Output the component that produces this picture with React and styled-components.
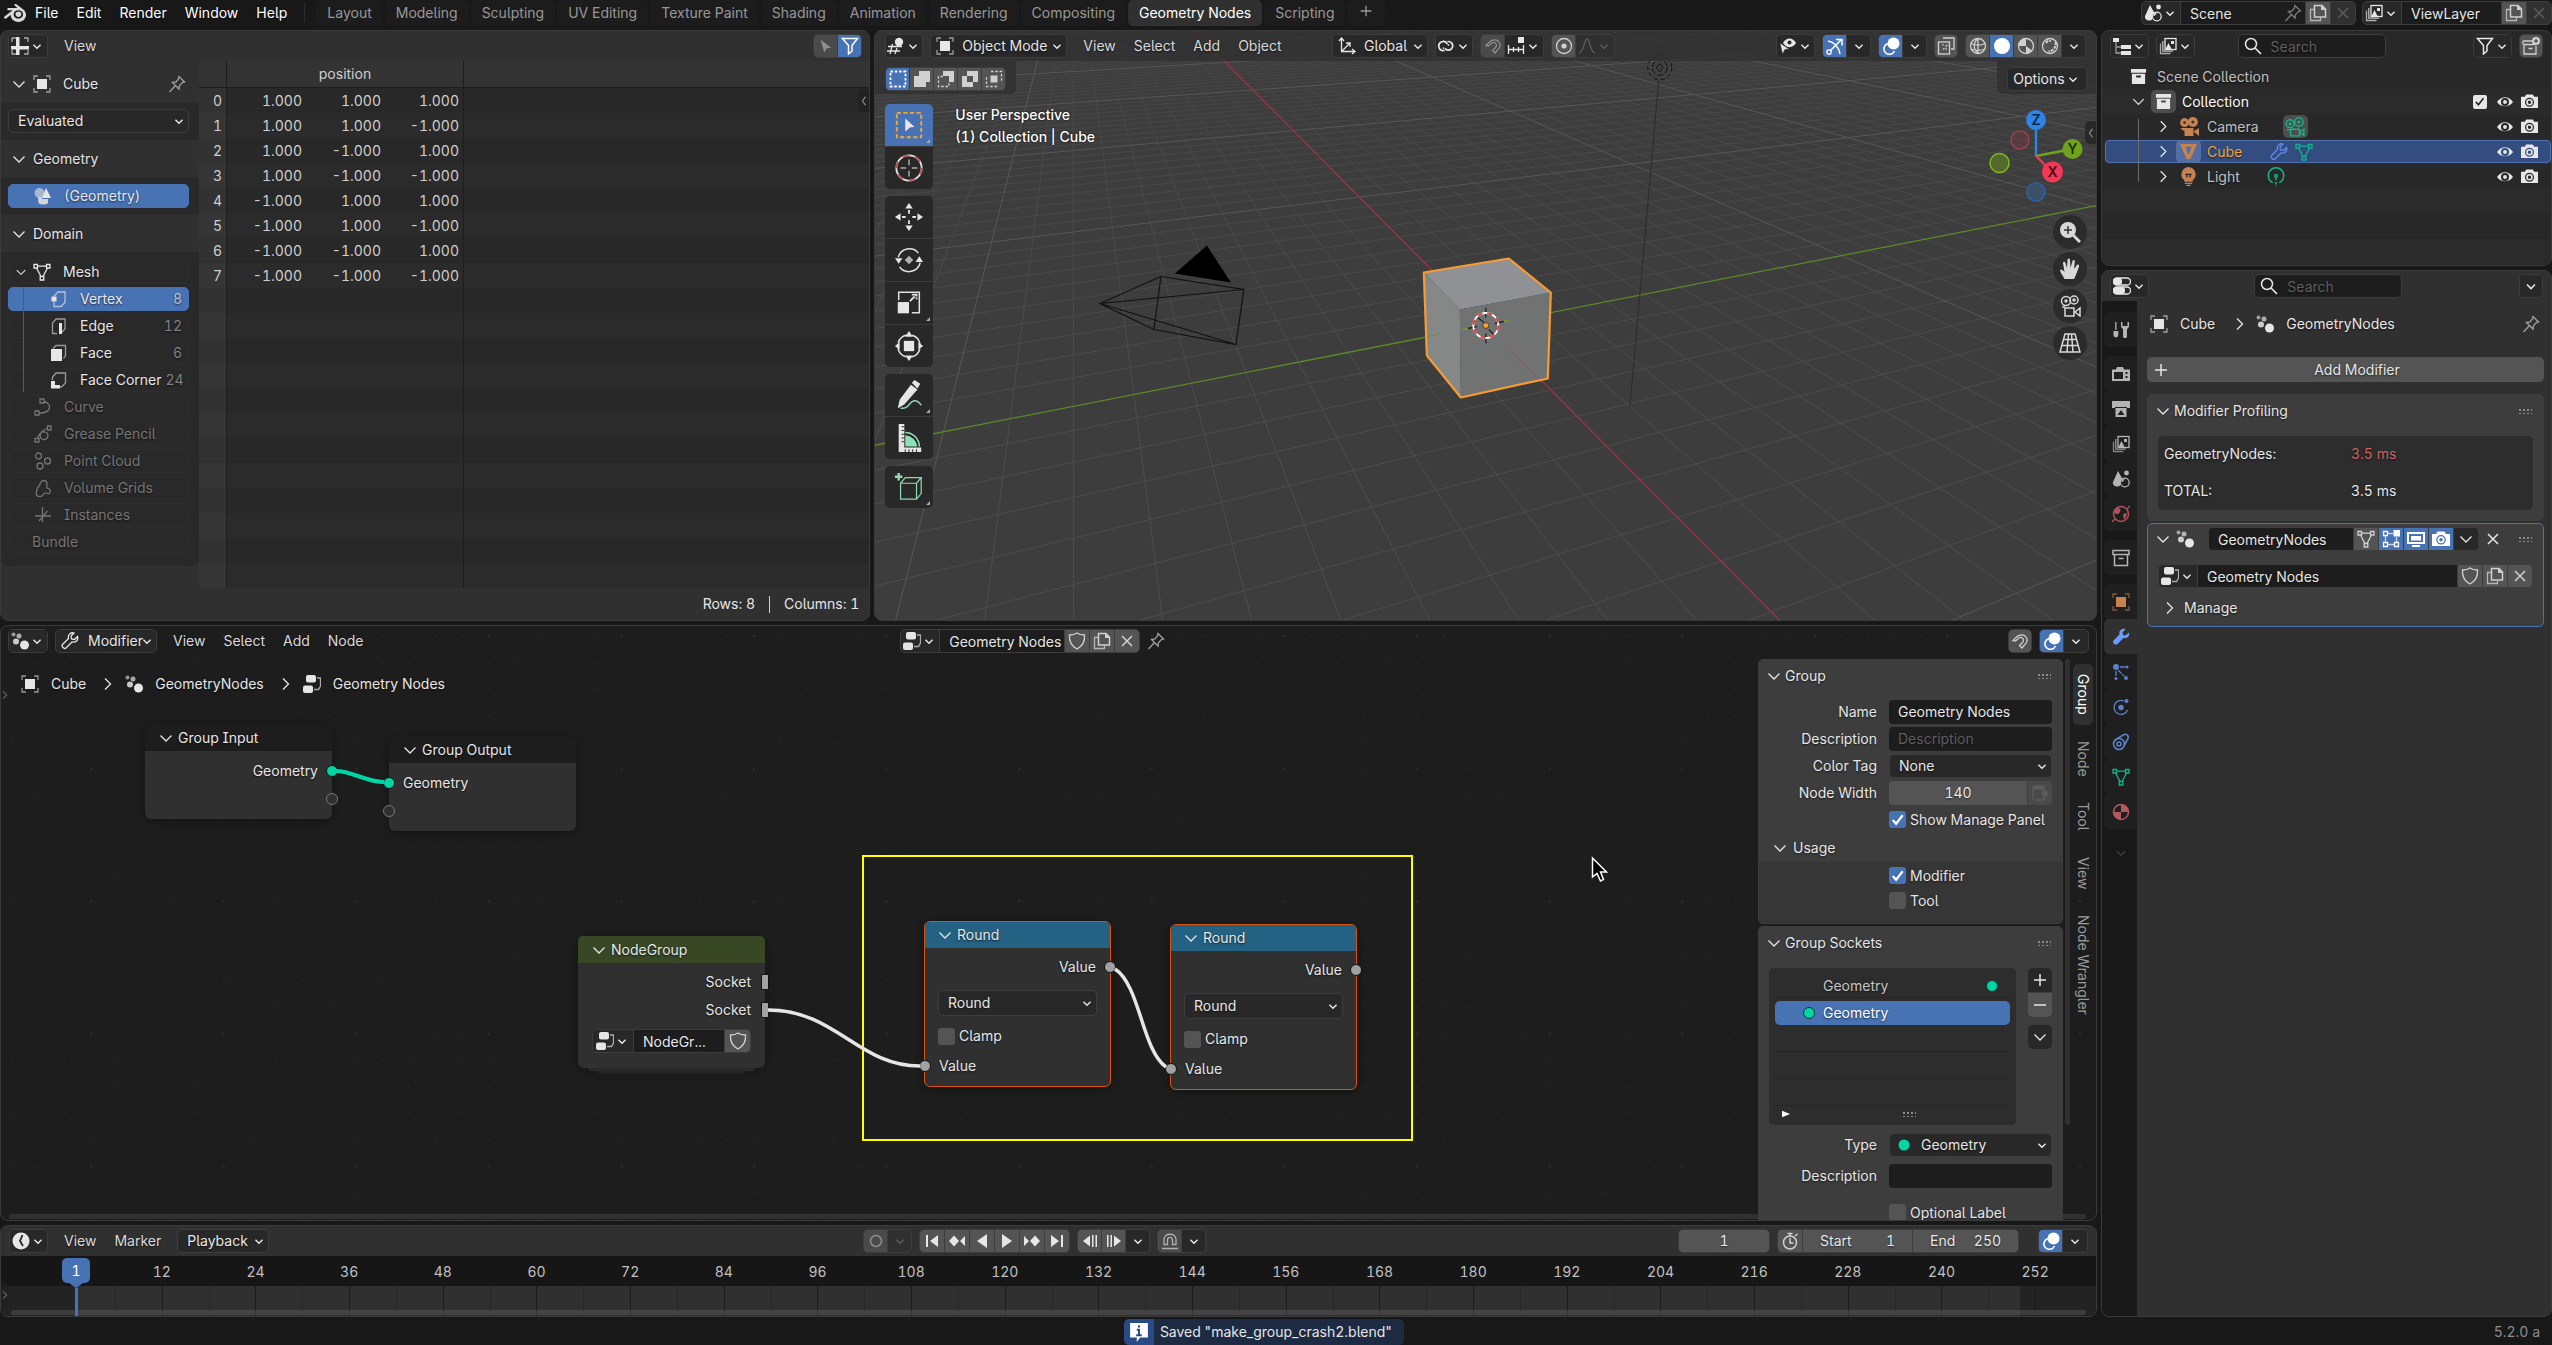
import React from "react";
import styled, { createGlobalStyle, css } from "styled-components";
import { SiBlender } from "react-icons/si";

const c = {
  app: "#181818",
  editor: "#303030",
  border: "#3a3a3a",
  field: "#1d1d1d",
  menu: "#282828",
  tool: "#545454",
  panel: "#3d3d3d",
  box: "#2d2d2d",
  blue: "#4772b3",
  text: "#e6e6e6",
  geo: "#00d6a3",
  orange: "#c68250",
  teal: "#12b48a",
};

const Global = createGlobalStyle`
  *, *::before, *::after { box-sizing: border-box; }
  body {
    margin: 0;
    background: ${c.app};
    color: ${c.text};
    font: 14px/20px Inter, "Open Sans", sans-serif;
    font-feature-settings: "tnum", "cv05", "cv08";
    overflow: hidden;
  }
  button, input, select {
    font: inherit;
    font-feature-settings: inherit;
    color: inherit;
    margin: 0;
    padding: 0;
    border: 0;
    background: none;
    border-radius: 0;
    text-shadow: inherit;
    outline: none;
  }
`;

/* ---------- icons ---------- */

const F = { fill: "currentColor", stroke: "none" };
const icons = {
  down: <path d="M5 7.500l4 4 4-4" strokeWidth="1.600" />,
  wide: <path d="M3.500 6.500L9 12l5.500-5.500" />,
  right: <path d="M6 3.500L11.500 9 6 14.500" />,
  left: <path d="M11 3.500L7 9l4 5.500" />,
  object: <><path d="M1 5V1h4M13 1h4v4M17 13v4h-4M5 17H1v-4" opacity=".6" /><rect x="4" y="4" width="10" height="10" {...F} /></>,
  sheet: <><path d="M1 5V1h4M13 1h4v4M17 13v4h-4M5 17H1v-4" opacity=".7" /><path d="M5 0h3.500v18H5zM0 9h18v3.500H0z" {...F} /></>,
  pin: <path d="M11 1.500l5.500 5.500-2 .5-3 3-.5 3.500L4.500 7.500 8 7l2.500-3zM7.500 10.500L1.500 17" />,
  geoset: <><circle cx="5.500" cy="6" r="5" {...F} opacity=".6" /><path d="M12 1l5 10H8z" {...F} /><path d="M4 10h3.500l1 2H14v4c-2 2-7 2-9.500 0z" {...F} opacity=".85" /></>,
  mesh: <path d="M1 1.500h3.500V5H1zM13.500 1.500H17V5h-3.500zM7.200 13.500h3.600V17H7.200zM4.500 3.200h9M3.500 5L8 13.500M14.500 5L10 13.500" />,
  vertex: <><path d="M4 12V16.500h7l4-4V2H8L4 6" opacity=".7" /><rect x="1.500" y="6.500" width="5" height="5" {...F} /></>,
  edge: <><path d="M7 16.500H2.500V6L6 2h9v10l-3 3" opacity=".6" /><rect x="9" y="6" width="3" height="11" {...F} /></>,
  face: <><path d="M3 4.500L6 1.500h9.500v10l-2 3" opacity=".6" /><rect x="1" y="5" width="11" height="12" {...F} /></>,
  corner: <><path d="M2.500 9V6L6 2h9.500v10l-4 4H9" opacity=".6" /><path d="M1 10h4v4h5v3.500H1z" {...F} /></>,
  curve: <path d="M6 1h4v4H6zM1 13h4v4H1zM10 3.500c8 2 8 11.500-4.500 11.500" />,
  grease: <path d="M13.500 1H17v4h-3.500zM1 13.500h4v3.500H1zM13 3.500c-7 2-9 9-4 11 5 1 7-6 2-7.500-4-1-6 2-7.500 6" />,
  points: <><circle cx="4.500" cy="4" r="3" /><circle cx="13.500" cy="9" r="3" /><circle cx="6" cy="14" r="3" /></>,
  volume: <path d="M3 16.500c-2-2 0-4 0-6 0-3 2-2 3-5 0-2 2-4 4-4s3 2 3 4c0 2-1 2 0 3.500 2 0 4 2 3 4.500-1 2-3 1-4 .5-2-1-3 3-5 3.500-2 .5-3 0-4-1z" />,
  instances: <path d="M8.500 1v15M1 10h16M13.500 5L5 15" />,
  arrow: <path d="M3 2l12 9-5 .5L7 16z" {...F} />,
  funnel: <path d="M1.500 1.500h15L11 8.500v5.500l-3.500 3V8.500z" strokeWidth="1.500" />,
  view3d: <><path d="M1 9.500h14M0 14h13M5.500 7L3 17M10 11L8 17" /><circle cx="12" cy="5" r="4.200" {...F} /></>,
  axes: <path d="M3.500 1v13.500H17M1 4l2.500-3L6 4M14 12l3 2.500-3 2.500M3.500 14.500L12 6M8 6h4v4" />,
  pivot: <path d="M7 13.500a4.500 4.500 0 1 1 3-7M11 4.500a4.300 4.300 0 1 1-2.500 7.500M11.500 7.800v.1M6.500 11v.1" strokeWidth="1.700" strokeLinecap="round" />,
  magnet: <path d="M2 8.500l3-3C8 2 13 2 15 5s1 6-2 8.500L11 16l-2.500-2.500 2.800-2.800c2-2 1-4 0-4.700-1-.8-3-.5-4.300.8L4.500 9z" />,
  magnetflat: <path d="M3 12.500V7.500C3 .5 15 .5 15 7.500v5h-3.500V8c0-3.500-5-3.500-5 0v4.500zM1 16.500h16" />,
  snapinc: <><rect x="11" y="0" width="6" height="6" {...F} /><path d="M1.500 8v9M6.500 10v5M11.500 10v5M16.500 8v9M1.500 12.500h15" /></>,
  prop: <><circle cx="9" cy="9" r="7.500" /><circle cx="9" cy="9" r="2.600" {...F} /></>,
  falloff: <path d="M1 16c5 0 5-14 8-14s3 14 8 14" />,
  eyecursor: <><path d="M4 6c3-6 10-6 13 0-3 5-9 6-13 0z" {...F} /><circle cx="10.500" cy="5.500" r="2" fill="#282828" stroke="none" /><path d="M1 6l9 6-4 .5L3.500 17z" {...F} stroke="#282828" strokeWidth=".5" /></>,
  gizmo: <><path d="M2 16L15 3M10 2.500h6v6M2 4c6 1 11 6 12 13" strokeWidth="1.500" /><circle cx="3" cy="15" r="2.200" fill="#4772b3" /></>,
  overlay: <><circle cx="11.500" cy="6.500" r="6" {...F} /><path d="M6 6.500a5.500 5.500 0 1 0 6.500 7.500" strokeWidth="1.600" /></>,
  xray: <><path d="M6 1h11v11h-3" /><rect x="1.500" y="5" width="11" height="12" /><path d="M6 8.500V6M9 8.500h3M6 12h3v-3.500" strokeDasharray="1.500 1.200" /></>,
  wire: <><circle cx="9" cy="9" r="7.500" /><path d="M9 1.500v15M2 6.500c4 2 10 2 14 0M2 12c4 1.500 10 1.500 14 0M9 1.500c-5 4-5 11 0 15" /></>,
  solid: <circle cx="9" cy="9" r="8" {...F} />,
  matprev: <><circle cx="9" cy="9" r="7.500" /><path d="M9 1.500V9l6 4.500A7.500 7.500 0 0 1 9 16.500V9H1.500A7.500 7.500 0 0 1 9 1.500z" {...F} /></>,
  rendered: <><circle cx="9" cy="9" r="7.500" /><path d="M5 6c1-2 3-2.500 5-2M14.500 5c1 5-2 9-7 9.500" strokeWidth="2" strokeDasharray="3 1" /></>,
  selnew: <rect x="1.500" y="1.500" width="15" height="15" strokeDasharray="2.500 1.800" strokeWidth="1.800" />,
  seladd: <path d="M6 1h11v11h-4v5H1V6h5z" {...F} />,
  selsub: <><path d="M6 1h11v11h-5V6H6z" {...F} /><path d="M6 6.500H1.500v10H12V12" strokeDasharray="2.500 1.800" /></>,
  selxor: <path d="M6 1h11v11h-5v5H1V6h5zM6 6v6h6V6z" fillRule="evenodd" {...F} />,
  selint: <><rect x="5.500" y="5.500" width="7" height="7" {...F} /><path d="M6 1.500h10.500V12M12 16.500H1.500V6" strokeDasharray="2.500 1.800" /></>,
  scene: <><path d="M6 1l5 9c-2 0-3 2-3 5.500C6 18 0 16 1 12z" {...F} /><circle cx="14.500" cy="3" r="2.400" {...F} /><circle cx="12.800" cy="12.500" r="4.400" /><path d="M10 12a3 3 0 0 1 2.500-2.500" /></>,
  layers: <><path d="M1.500 6.500v10h10" opacity=".7" /><path d="M3.800 4v10.200H14" opacity=".8" /><rect x="6" y="1.500" width="11" height="11" /><path d="M6.500 12l3-6 3 6zM12 4h3v3h-3z" {...F} /></>,
  copy: <><path d="M5.500 1.500H13L16.500 5v8h-11z" strokeWidth="1.500" /><path d="M5 5.500H1.500v11h10V14" opacity=".8" /><path d="M12 1l5 5h-5z" {...F} /></>,
  x: <path d="M4 4l10 10M14 4L4 14" strokeWidth="1.500" />,
  outliner: <><path d="M0 1h6v4H0zM8 8h10v4H8zM8 14h10v4H8z" {...F} /><path d="M3 5v11h5M3 10h5" opacity=".6" /></>,
  search: <><circle cx="7" cy="7" r="5.500" strokeWidth="1.500" /><path d="M11 11l6 6" strokeWidth="1.700" /></>,
  newcol: <><path d="M1 4h9M2 7.500h12M2 7.500V17h12V9M6.500 11.500h4M1 4v3.500" /><circle cx="14" cy="4" r="4" {...F} /><path d="M14 2v4M12 4h4" stroke="#545454" /></>,
  collection: <><path d="M1 1h16v4H1z" {...F} /><path d="M2 6h14v11H2zM6.500 8v2h5V8z" fillRule="evenodd" {...F} /></>,
  collectionline: <path d="M1 1.500h16v4H1zM2.500 5.500v11h13v-11M6.500 9.500h5" strokeWidth="1.500" />,
  camobj: <><circle cx="5" cy="5" r="4" {...F} /><circle cx="12.500" cy="4.500" r="4.500" {...F} /><path d="M5 10h8v7H5zM13 13l5-3v7z M1 10h4v3z" {...F} /><circle cx="5" cy="5" r="1.200" fill="#333" stroke="none" /><circle cx="12.500" cy="4.500" r="1.400" fill="#333" stroke="none" /></>,
  camdata: <><circle cx="4.500" cy="6" r="3.500" /><circle cx="12.500" cy="4.500" r="3.800" /><circle cx="4.500" cy="6" r=".7" /><circle cx="12.500" cy="4.500" r=".7" /><path d="M5 11h8v6H5zM13 13.500l4-2.500v5.500zM1.500 11.500H5" /></>,
  meshobj: <path d="M0 1h18L11 17H7zM5.500 4L9 12.500 12.500 4z" fillRule="evenodd" {...F} />,
  wrench: <path d="M16.500 4.500l-3 3-3-.5-.5-3 3-3c-3-1-6.500 1.500-5.500 5.500L1.500 12.500c-1.500 2 1.500 5 3.500 3.500l6-6c4 1 6.500-2 5.500-5.500z" />,
  wrenchfill: <path d="M17 4.500l-3.500 3-2.500-.5-.5-2.500 3-3.500C10 0 6.500 2.500 7.500 6.500L1.500 12.500c-1.500 2 1.500 5.500 4 3.500l6-6c4 .5 6.500-2 5.500-5.500z" {...F} />,
  bulb: <><path d="M9 0a7 7 0 0 0-4 12.500V14h8v-1.500A7 7 0 0 0 9 0z" {...F} /><path d="M5.500 15.500h7M7 17.500h4" /><path d="M6 7h6M7.500 7v3M10.500 7v3" stroke="#2a2a2a" /></>,
  lightdata: <><path d="M6 14a7 7 0 1 1 6 0" /><circle cx="9" cy="8" r="1.200" /><path d="M9 9.500V18" strokeDasharray="2.500 1.500" /></>,
  eye: <path d="M0 9c4.500-7 13.500-7 18 0-4.500 6.500-13.500 6.500-18 0zM9 4.500a4.500 4.500 0 1 0 0 9 4.500 4.500 0 0 0 0-9zM9 6.800a2.200 2.200 0 1 1 0 4.400 2.200 2.200 0 0 1 0-4.400z" fillRule="evenodd" {...F} />,
  camera: <path d="M0 4h4l1.500-2.500h7L14 4h4v12H0zM9 5a4.800 4.800 0 1 0 0 9.600A4.800 4.800 0 0 0 9 5zM9 6.300a3.500 3.500 0 1 1 0 7 3.500 3.500 0 0 1 0-7zM9 8a1.800 1.800 0 1 0 0 3.600A1.800 1.800 0 0 0 9 8z" fillRule="evenodd" {...F} />,
  props: <><rect x=".5" y="1" width="17" height="7" rx="3.500" /><rect x="0" y="1" width="9" height="7" rx="3" {...F} /><rect x=".5" y="10" width="17" height="7" rx="3.500" /><rect x="0" y="10" width="12" height="7" rx="3" {...F} /></>,
  tools: <><path d="M3.200 1h1.300v8H3.200zM1.500 10h4.800v4a2.400 2.400 0 0 1-4.800 0z" {...F} /><path d="M9 1v4c0 2 2 3 2 3v7.500c0 2 4 2 4 0V8s2-1 2-3V1h-1.500v4h-5V1z" {...F} /></>,
  render: <path d="M5 2h6l1 2.500h6V16H0V4.500h4zM2 7v7h9V7zM13.500 7v2h2V7zM13.500 11v2h2v-2z" fillRule="evenodd" {...F} />,
  output: <path d="M0 1h18v7h-3V7H3v1H0zM3.500 8h11v9h-11zM5.500 15h7l-3.500-5z" fillRule="evenodd" {...F} />,
  world: <><circle cx="9" cy="9" r="7.500" strokeWidth="1.500" /><path d="M3 5c3-4 7-1 5 2S6 9 4.500 9 2 7 3 5zM11 9l4-1-1 4-2 3z" {...F} /><path d="M0 17l3-3M15 4l3-3" /></>,
  particles: <><circle cx="4" cy="4" r="3" {...F} /><path d="M8 4h5M6 7l6 6M4 8v6" strokeDasharray="5 1" /><circle cx="15" cy="4" r="1.600" {...F} /><circle cx="14" cy="15" r="2" {...F} /><circle cx="4" cy="15.500" r="1.600" {...F} /></>,
  physics: <><path d="M12 3a7 7 0 1 0 3.500 9" /><circle cx="9" cy="9.500" r="2.700" {...F} /><circle cx="14.500" cy="3" r="2" {...F} /></>,
  constraint: <><circle cx="7" cy="11" r="5.500" strokeWidth="1.600" /><circle cx="7" cy="11" r="2" strokeWidth="1.600" /><path d="M3 7l9-5.500c3-1 5 2 4 4L12 13" strokeWidth="1.600" /></>,
  material: <><circle cx="9" cy="9" r="7.500" strokeWidth="1.500" /><path d="M9 1.500V9h7.500A7.500 7.500 0 0 0 9 1.500zM9 9v7.500A7.500 7.500 0 0 1 1.500 9z" {...F} /></>,
  geonodes: <><circle cx="2.500" cy="2.500" r="2" {...F} opacity=".6" /><circle cx="8" cy="4" r="2.500" {...F} opacity=".7" /><circle cx="5" cy="9.500" r="3" {...F} opacity=".85" /><circle cx="13.500" cy="13" r="4.500" {...F} /></>,
  nodetree: <><rect x="3" y="0" width="10" height="7.500" rx="2" {...F} /><rect x="0" y="10.500" width="10" height="7.500" rx="2" {...F} /><path d="M14 3h3.500v8l-2 3.500H11" opacity=".7" /></>,
  shield: <path d="M9 1c2 1.500 4.500 2 7.500 2 .5 6-2 11-7.500 14C3.500 14 1 9 1.500 3 4.500 3 7 2.500 9 1z" />,
  editmode: <><path d="M5.500 3.500H11M3.500 5.500v7M5.500 14.500h7M14.500 7v5.500" opacity=".7" /><path d="M1.500 1.500h4v4h-4zM1.500 12.500h4v4h-4zM12.500 12.500h4v4h-4z" /><rect x="11.500" y="0" width="6.500" height="6.500" {...F} /></>,
  monitor: <path d="M0 2h18v12H0zM2 4v8h14V4zM4 6h10v4.500H4zM5 15h8v2H5z" fillRule="evenodd" {...F} />,
  plus: <path d="M9 3v12M3 9h12" strokeWidth="1.500" />,
  minus: <path d="M3 9h12" strokeWidth="1.500" />,
  clock: <><circle cx="9" cy="9" r="8.500" {...F} /><path d="M10.500 3L8 9l3 5" stroke="#282828" strokeWidth="1.800" /></>,
  dot: <circle cx="9" cy="9" r="5.500" strokeWidth="1.500" />,
  first: <path d="M3 3h2v12H3zM15 3v12L7 9z" {...F} />,
  prevkey: <path d="M6 3.500L11 9l-5 5.500L1 9zM17 4v10l-5-5z" {...F} />,
  playback: <path d="M14 2v14L4 9z" {...F} />,
  play: <path d="M4 2v14l10-7z" {...F} />,
  nextkey: <path d="M12 3.500L17 9l-5 5.500L7 9zM1 4v10l5-5z" {...F} />,
  last: <path d="M13 3h2v12h-2zM3 3v12l8-6z" {...F} />,
  stepback: <path d="M9 3.500v11L2 9zM11 3h1.500v12H11zM14.500 3H16v12h-1.500z" {...F} />,
  stepfwd: <path d="M9 3.500v11L16 9zM5.500 3H7v12H5.500zM2 3h1.500v12H2z" {...F} />,
  stopwatch: <><circle cx="9" cy="10.500" r="6.500" strokeWidth="1.500" /><path d="M9 6v5h3.500M6.500 1.500h5M9 1.500V4M14 4l2.500-2" strokeWidth="1.500" /></>,
  decorate: <><rect x="2" y="2" width="11" height="14" rx="2" /><path d="M2 4h11" strokeWidth="3" /><circle cx="14" cy="9.500" r="3" {...F} /></>,
  info: <><path d="M1 1h16v13h-7l-3 4v-4H1z" {...F} /><path d="M9 3v2M7 7h2v5M6.500 12h5" stroke="#294a82" strokeWidth="1.800" /></>,
  tri: <path d="M3 4l12 5-12 5z" {...F} />,
  geodot: <circle cx="9" cy="9" r="5.500" {...F} />,
  check: <path d="M4 9.500l3.500 4L14.500 4.500" strokeWidth="2.200" />,
};

const IconSvg = styled.svg`
  flex: none;
  width: ${(p) => p.$s}px;
  height: ${(p) => p.$s}px;
  color: ${(p) => p.$c || "inherit"};
  fill: none;
  stroke: currentColor;
  stroke-width: 1.3;
`;
const Icon = ({ n, s = 18, color }) => (
  <IconSvg $s={s} $c={color} viewBox="0 0 18 18" aria-hidden="true">{icons[n]}</IconSvg>
);

/* ---------- shared widgets ---------- */

const shade = css`text-shadow: 0 1px 2px rgba(0, 0, 0, 0.6);`;

const Editor = styled.section`
  position: relative;
  display: flex;
  flex-direction: column;
  min-width: 0;
  min-height: 0;
  flex: ${(p) => p.$flex || "1 1 0"};
  background: ${(p) => p.$bg || c.editor};
  border: 1px solid ${c.border};
  border-radius: 8px;
  overflow: hidden;
`;
const Header = styled.header`
  position: relative;
  z-index: 1;
  display: flex;
  align-items: center;
  flex: none;
  gap: 7px;
  height: 30px;
  padding: 0 ${(p) => p.$pad || 8}px;
  background: ${(p) => p.$bg || "transparent"};
`;
const Spacer = styled.div`
  flex: ${(p) => p.$n || 1} 1 0;
`;
const Menus = styled.nav`
  display: flex;
  gap: 18px;
  margin: 0 9px;
`;
const MenuButton = styled.button`
  color: ${(p) => (p.$bright ? "#ffffff" : "#d9d9d9")};
  ${shade}
`;
const Group = styled.div`
  display: flex;
  flex: ${(p) => (p.$grow ? "1 1 0" : "none")};
  gap: 1px;
  height: 24px;
  border: 1px solid #3d3d3d;
  border-radius: 5px;
  background: #3d3d3d;
  overflow: hidden;
`;
const toneOf = {
  dark: css`background: ${c.menu}; color: ${c.text};`,
  tool: css`background: ${c.tool}; color: #d0d0d0;`,
  dim: css`background: #4a4a4a; color: #8f8f8f;`,
  off: css`background: ${c.editor}; color: #5c5c5c;`,
  blue: css`background: ${c.blue}; color: #ffffff;`,
};
const Seg = styled.button`
  display: flex;
  align-items: center;
  justify-content: center;
  flex: none;
  width: ${(p) => p.$w || 24}px;
  ${(p) => toneOf[p.$tone || "dark"]}
`;
const TypeButton = ({ icon, label, w = 38 }) => (
  <Group><Seg $w={w} aria-label={label}><Icon n={icon} /><Icon n="down" s={16} /></Seg></Group>
);
const SelectWrap = styled.span`
  position: relative;
  display: flex;
  align-items: center;
  flex: none;
  width: ${(p) => (p.$w ? `${p.$w}px` : "auto")};
  height: ${(p) => p.$h || 24}px;
  border: 1px solid #3d3d3d;
  border-radius: 5px;
  background: ${c.menu};
  overflow: hidden;
  & > svg:first-child { position: absolute; left: 5px; pointer-events: none; }
  & > svg:last-child { position: absolute; right: 1px; pointer-events: none; }
`;
const SelectInput = styled.select`
  appearance: none;
  width: 100%;
  height: 100%;
  padding-left: ${(p) => p.$pl}px;
  ${shade}
`;
const Select = ({ icon, value, label, w, h, pl = 9, color, id }) => (
  <SelectWrap $w={w} $h={h}>
    {icon && <Icon n={icon} color={color} />}
    <SelectInput id={id} $pl={pl} aria-label={id ? undefined : label} defaultValue={value}><option>{value}</option></SelectInput>
    <Icon n="down" s={16} />
  </SelectWrap>
);
const Field = styled.input`
  flex: 1 1 0;
  width: 100%;
  min-width: 0;
  height: ${(p) => p.$h || 22}px;
  padding: 0 ${(p) => (p.$align === "center" ? 9 : 0)}px 0 9px;
  background: ${(p) => p.$bg || c.field};
  border-radius: ${(p) => p.$r || 0}px;
  text-align: ${(p) => p.$align || "left"};
  ${shade}
  &::placeholder { color: #5e5e5e; opacity: 1; }
`;
const SearchBox = styled.label`
  display: flex;
  align-items: center;
  flex: none;
  width: 148px;
  height: 24px;
  padding: 0 5px;
  border: 1px solid #3d3d3d;
  border-radius: 5px;
  background: ${c.field};
`;
const Search = ({ label }) => (
  <SearchBox><Icon n="search" /><Field type="search" aria-label={label} placeholder="Search" /></SearchBox>
);
const CheckLabel = styled.label`
  display: flex;
  align-items: center;
  gap: 4px;
  position: relative;
  height: ${(p) => p.$h || 24}px;
  white-space: nowrap;
  ${shade}
  & > svg { position: absolute; left: 0; pointer-events: none; }
`;
const CheckInput = styled.input`
  appearance: none;
  flex: none;
  width: 17px;
  height: 17px;
  border-radius: 3px;
  background: ${c.tool};
  &:checked { background: ${c.blue}; }
`;
const Check = ({ label, on, h }) => (
  <CheckLabel $h={h}>
    <CheckInput type="checkbox" defaultChecked={on} />
    {on && <Icon n="check" s={17} color="#fff" />}
    {label}
  </CheckLabel>
);
const DotsBox = styled.span`
  flex: none;
  width: 14px;
  height: 6px;
  background: radial-gradient(circle, #8a8a8a 1px, transparent 1px) 0 0 / 4px 4px;
`;
const Crumb = styled.span`
  display: flex;
  align-items: center;
  gap: 12px;
  ${shade}
`;
const CollapseTab = styled.button`
  position: absolute;
  z-index: 2;
  top: ${(p) => p.$top}px;
  ${(p) => p.$side}: 0;
  display: flex;
  align-items: center;
  justify-content: center;
  width: ${(p) => (p.$side === "left" ? 8 : 11)}px;
  height: 23px;
  color: #a0a0a0;
  background: rgba(32, 32, 32, 0.7);
  border-radius: ${(p) => (p.$side === "right" ? "5px 0 0 5px" : "0 5px 5px 0")};
`;

/* ---------- top bar ---------- */

const TopBarBox = styled.header`
  display: flex;
  align-items: center;
  height: 30px;
  padding: 0 0 4px 4px;
`;
const MainMenu = styled.nav`
  display: flex;
  gap: 18px;
  margin: 0 11px 0 9px;
  padding-right: 17px;
  border-right: 1px solid #2c2c2c;
`;
const Workspaces = styled.div`
  display: flex;
  gap: 2px;
`;
const WorkspaceTab = styled.button`
  height: 26px;
  padding: 0 11px;
  border-radius: 5px;
  color: ${(p) => (p.$active ? "#ffffff" : "#989898")};
  background: ${(p) => (p.$active ? "#303030" : "#1c1c1c")};
`;
const IdRow = styled.div`
  display: flex;
  gap: 6px;
`;
const IdName = styled.div`
  display: flex;
  align-items: center;
  width: ${(p) => p.$w}px;
  background: ${c.field};
  color: #7d7d7d;
  & > input { color: ${c.text}; }
  & > svg { margin-right: 3px; }
`;
const menus = ["File", "Edit", "Render", "Window", "Help"];
const spaces = ["Layout", "Modeling", "Sculpting", "UV Editing", "Texture Paint", "Shading", "Animation", "Rendering", "Compositing", "Geometry Nodes", "Scripting"];

const TopBar = () => (
  <TopBarBox>
    <SiBlender size={22} color="#d9d9d9" aria-label="Blender" />
    <MainMenu>{menus.map((m) => <MenuButton key={m} $bright>{m}</MenuButton>)}</MainMenu>
    <Workspaces role="tablist">
      {spaces.map((s) => <WorkspaceTab key={s} role="tab" $active={s === "Geometry Nodes"}>{s}</WorkspaceTab>)}
      <WorkspaceTab aria-label="Add workspace"><Icon n="plus" s={16} /></WorkspaceTab>
    </Workspaces>
    <Spacer />
    <IdRow>
      <Group>
        <Seg $w={38} aria-label="Browse scene"><Icon n="scene" /><Icon n="down" s={16} /></Seg>
        <IdName $w={124}><Field aria-label="Scene" defaultValue="Scene" /><Icon n="pin" /></IdName>
        <Seg $tone="tool" aria-label="New scene"><Icon n="copy" /></Seg>
        <Seg $tone="off" aria-label="Unlink scene"><Icon n="x" /></Seg>
      </Group>
      <Group>
        <Seg $w={38} aria-label="Browse view layer"><Icon n="layers" /><Icon n="down" s={16} /></Seg>
        <IdName $w={99}><Field aria-label="View layer" defaultValue="ViewLayer" /></IdName>
        <Seg $tone="tool" aria-label="New view layer"><Icon n="copy" /></Seg>
        <Seg $tone="off" aria-label="Remove view layer"><Icon n="x" /></Seg>
      </Group>
    </IdRow>
  </TopBarBox>
);

/* ---------- spreadsheet ---------- */

const SheetBody = styled.div`
  display: flex;
  flex: 1 1 0;
  min-height: 0;
`;
const DataTree = styled.aside`
  flex: none;
  width: 198px;
`;
const TreeHeader = styled.div`
  display: flex;
  align-items: center;
  gap: 5px;
  height: ${(p) => (p.$top ? 42 : 37)}px;
  padding: ${(p) => (p.$top ? 4 : 0)}px 13px 0 9px;
  background: ${c.editor};
  ${shade}
  & > span { flex: 1; }
  & > svg + span { padding-left: ${(p) => (p.$top ? 7 : 0)}px; }
`;
const TreeSection = styled.div`
  display: flex;
  flex-direction: column;
  gap: 3px;
  padding: ${(p) => p.$pt || 6}px 10px ${(p) => p.$pb || 7}px 7px;
  background: #292929;
  border-radius: ${(p) => (p.$last ? "0 0 8px 8px" : 0)};
`;
const TreeRow = styled.button`
  display: flex;
  align-items: center;
  gap: 12px;
  height: 24px;
  padding: 0 6px 0 ${(p) => [5, 25, 41, 23][p.$lvl]}px;
  text-align: left;
  border: 1px solid ${(p) => (p.$active ? c.blue : "#2d2d2d")};
  border-radius: 5px;
  color: ${(p) => (p.$off ? "#757575" : c.text)};
  background: ${(p) => (p.$active ? c.blue : "transparent")};
  ${shade}
  & > svg + svg { margin-left: -7px; }
  & > em { margin-left: auto; font-style: normal; color: ${(p) => (p.$active ? "#b4c2dc" : "#808080")}; }
`;
const TreeText = styled.span`
  white-space: nowrap;
  margin-right: -8px;
`;
const Nest = styled.div`
  position: relative;
  display: flex;
  flex-direction: column;
  gap: 3px;
  &::before {
    content: "";
    position: absolute;
    left: 15px;
    top: 0;
    bottom: 0;
    width: 1px;
    background: #5a5a5a;
  }
`;
const TableWrap = styled.div`
  flex: 1 1 0;
  overflow: hidden;
`;
const Table = styled.table`
  width: 100%;
  table-layout: fixed;
  border-collapse: separate;
  border-spacing: 0;
  color: #cfcfcf;
`;
const HeadCell = styled.th`
  height: 27px;
  padding: 0;
  font-weight: 400;
  background: #333333;
  border-bottom: 1px solid #1e1e1e;
  border-right: ${(p) => (p.$line ? "1px solid #1e1e1e" : 0)};
`;
const IndexCell = styled.th`
  height: 25px;
  padding: 0 4px 0 0;
  font-weight: 400;
  text-align: right;
  background: ${(p) => (p.$odd ? "#353535" : "#323232")};
  border-right: 1px solid #1e1e1e;
`;
const Cell = styled.td`
  height: 25px;
  padding: 0 4px 0 0;
  text-align: right;
  background: ${(p) => (p.$odd ? "#2b2b2b" : "#282828")};
  border-right: ${(p) => (p.$line ? "1px solid #1e1e1e" : 0)};
`;
const SheetFooter = styled.footer`
  display: flex;
  align-items: center;
  justify-content: flex-end;
  gap: 14px;
  height: 32px;
  padding-right: 10px;
  & > i { width: 1px; height: 17px; background: #cfcfcf; }
`;
const verts = [0, 1, 2, 3, 4, 5, 6, 7].map((i) => [i & 4 ? -1 : 1, i & 2 ? -1 : 1, i & 1 ? -1 : 1]);
const domains = [["vertex", "Vertex", 8], ["edge", "Edge", 12], ["face", "Face", 6], ["corner", "Face Corner", 24]];
const emptyTypes = [["curve", "Curve"], ["grease", "Grease Pencil"], ["points", "Point Cloud"], ["volume", "Volume Grids"], ["instances", "Instances"]];

const Spreadsheet = () => (
  <Editor $flex="870 1 0">
    <Header $pad={7}>
      <TypeButton icon="sheet" label="Editor type: Spreadsheet" />
      <Menus><MenuButton>View</MenuButton></Menus>
      <Spacer />
      <Group>
        <Seg $tone="dim" $w={23} aria-label="Selected only"><Icon n="arrow" s={16} /></Seg>
        <Seg $tone="blue" $w={23} aria-label="Use filter"><Icon n="funnel" /></Seg>
      </Group>
    </Header>
    <SheetBody>
      <DataTree>
        <TreeHeader $top><Icon n="wide" /><Icon n="object" /><span>Cube</span><Icon n="pin" color="#a0a0a0" /></TreeHeader>
        <TreeSection><Select value="Evaluated" label="Object evaluation state" /></TreeSection>
        <TreeHeader><Icon n="wide" /><span>Geometry</span></TreeHeader>
        <TreeSection $pt={7} $pb={7}><TreeRow $active $lvl={1}><Icon n="geoset" /><TreeText>(Geometry)</TreeText></TreeRow></TreeSection>
        <TreeHeader><Icon n="wide" /><span>Domain</span></TreeHeader>
        <TreeSection $pt={8} $pb={12} $last>
          <TreeRow $lvl={0}><Icon n="wide" s={14} /><Icon n="mesh" /><TreeText>Mesh</TreeText></TreeRow>
          <Nest>
            {domains.map(([ic, t, n]) => (
              <TreeRow key={t} $lvl={2} $active={n === 8}><Icon n={ic} /><TreeText>{t}</TreeText><em>{n}</em></TreeRow>
            ))}
          </Nest>
          {emptyTypes.map(([ic, t]) => <TreeRow key={t} $lvl={1} $off><Icon n={ic} /><TreeText>{t}</TreeText></TreeRow>)}
          <TreeRow $lvl={3} $off><TreeText>Bundle</TreeText></TreeRow>
        </TreeSection>
      </DataTree>
      <TableWrap>
        <Table>
          <colgroup><col width="28" /><col width="79" /><col width="79" /><col width="79" /><col /></colgroup>
          <thead><tr><HeadCell $line /><HeadCell $line colSpan={3}>position</HeadCell><HeadCell /></tr></thead>
          <tbody>
            {Array.from({ length: 20 }, (_, i) => (
              <tr key={i}>
                <IndexCell scope="row" $odd={i % 2}>{i < 8 ? i : ""}</IndexCell>
                {[0, 1, 2].map((k) => <Cell key={k} $odd={i % 2} $line={k === 2}>{verts[i] ? verts[i][k].toFixed(3) : ""}</Cell>)}
                <Cell $odd={i % 2} />
              </tr>
            ))}
          </tbody>
        </Table>
      </TableWrap>
    </SheetBody>
    <SheetFooter><span>Rows: 8</span><i /><span>Columns: 1</span></SheetFooter>
    <CollapseTab $top={58} $side="right" aria-label="Show sidebar"><Icon n="left" s={14} /></CollapseTab>
  </Editor>
);

/* ---------- 3D viewport ---------- */

const SIN = 0.4305, COS = 0.9026, FOCAL = 849, DIST = 18, CX = 1485.5, CY = 325.5;
const project = (x, y) => {
  const right = 0.4014 * x + 0.9159 * y;
  const toward = 0.9159 * x - 0.4014 * y;
  const depth = DIST - COS * toward;
  return [CX + (FOCAL * right) / depth, CY + (FOCAL * SIN * toward) / depth, depth];
};
const segment = (a, b) => {
  let [p, q] = [a, b];
  const da = project(...p)[2], db = project(...q)[2], near = 2;
  if (da < near && db < near) return "";
  const mix = (t) => [a[0] + (b[0] - a[0]) * t, a[1] + (b[1] - a[1]) * t];
  if (da < near) p = mix((near - da) / (db - da));
  if (db < near) q = mix((near - da) / (db - da));
  const s = project(...p), e = project(...q);
  return `M${s[0].toFixed(1)} ${s[1].toFixed(1)}L${e[0].toFixed(1)} ${e[1].toFixed(1)}`;
};
const gridLines = (major) => {
  let d = "";
  for (let i = -120; i <= 120; i++) {
    if (i === 0 || (i % 10 === 0) !== major) continue;
    d += segment([i, -120], [i, 120]) + segment([-120, i], [120, i]);
  }
  return d;
};
const minorGrid = gridLines(false), majorGrid = gridLines(true);

const SceneSvg = styled.svg`
  position: absolute;
  inset: 0;
  width: 100%;
  height: 100%;
`;
const Scene = () => (
  <SceneSvg viewBox="875 31 1221 590" preserveAspectRatio="xMidYMid slice" fill="none" role="img" aria-label="Scene">
    <defs>
      <linearGradient id="fade" gradientUnits="userSpaceOnUse" x1="0" y1="31" x2="0" y2="420">
        <stop offset="0" stopColor="#424242" /><stop offset=".3" stopColor="#474747" /><stop offset="1" stopColor="#4c4c4c" />
      </linearGradient>
    </defs>
    <path d={minorGrid} stroke="url(#fade)" />
    <path d={majorGrid} stroke="#575757" />
    <path d="M874 446L2097 206" stroke="#5a8a26" strokeWidth="1.300" />
    <path d="M1194 31L1780 621" stroke="#a03340" strokeWidth="1.300" />
    <path d="M1659 80L1630 409" stroke="#2b2b2b" />
    <g stroke="#111">
      <circle cx="1660" cy="68" r="12" strokeDasharray="4 3" /><circle cx="1660" cy="68" r="7.500" strokeDasharray="6 2" />
      <path d="M1660 64l3.500 4-3.500 4-3.500-4z" />
      <path d="M1100 304L1161 277 1244 290 1236 345 1154 330zM1100 304L1244 290M1100 304L1236 345M1161 277L1154 330" strokeWidth="1.200" />
    </g>
    <path d="M1207 246L1175 274 1231 283z" fill="#000" />
    <path d="M1424 273L1509 259 1551 293 1460 310z" fill="#8f9194" />
    <path d="M1424 273L1460 310 1461 398 1427 356z" fill="#868887" />
    <path d="M1460 310L1551 293 1548 379 1461 398z" fill="#717372" />
    <path d="M1427 337l15-3" stroke="#6d8a4d" /><path d="M1506 347l36 36" stroke="#a85058" />
    <path d="M1424 273L1509 259 1551 293 1548 379 1461 398 1427 356z" stroke="#f79b33" strokeWidth="2.200" strokeLinejoin="round" />
    <path d="M1486 308v10M1486 334v10M1468 329l9-2M1495 324l9-2M1478 318l6 5M1489 330l6 6" stroke="#222" strokeWidth="1.300" />
    <path d="M1486 304v4M1486 344v4" stroke="#4a78c8" /><path d="M1463 330l5-1M1504 322l5-1" stroke="#6fa31c" strokeWidth="1.500" />
    <circle cx="1486" cy="326" r="12.500" stroke="#fff" strokeWidth="1.800" />
    <circle cx="1486" cy="326" r="12.500" stroke="#e33" strokeWidth="1.800" strokeDasharray="5 5" />
    <circle cx="1486" cy="326" r="3" fill="#f79b33" stroke="#222" strokeWidth=".7" />
  </SceneSvg>
);
const RegionRow = styled.div`
  position: relative;
  display: flex;
  justify-content: space-between;
  height: 33px;
`;
const RegionTab = styled.div`
  display: flex;
  align-items: center;
  padding: 2px ${(p) => (p.$right ? 9 : 10)}px 0 10px;
  background: rgba(48, 48, 48, 0.8);
  border-radius: ${(p) => (p.$right ? "0 0 0 6px" : "0 0 6px 0")};
`;
const ViewBody = styled.div`
  position: relative;
  display: flex;
  align-items: flex-start;
  padding: 10px 9px 0 10px;
`;
const ToolColumn = styled.div`
  display: flex;
  flex-direction: column;
  gap: 7px;
`;
const ToolGroup = styled.div`
  display: flex;
  flex-direction: column;
  gap: 1px;
  border-radius: 5px;
  overflow: hidden;
  background: #3a3a3a;
`;
const ToolButton = styled.button`
  position: relative;
  display: flex;
  align-items: center;
  justify-content: center;
  width: 48px;
  height: 42px;
  background: ${(p) => (p.$active ? c.blue : "#282828")};
  &::after {
    content: "";
    display: ${(p) => (p.$more ? "block" : "none")};
    position: absolute;
    right: 3px;
    bottom: 3px;
    border: solid transparent;
    border-width: 2px;
    border-right-color: #a8a8a8;
    border-bottom-color: #a8a8a8;
  }
`;
const ToolSvg = styled.svg`
  width: 30px;
  height: 30px;
  fill: none;
  stroke: #e0e0e0;
  stroke-width: 1.6;
`;
const W = { fill: "#e6e6e6", stroke: "none" };
const toolArt = {
  select: <><rect x="3" y="3" width="26" height="26" stroke="#f0a832" strokeDasharray="4.500 2.500" strokeWidth="2" /><path d="M12 9l10 9-4.500.5L12 23z" {...W} /></>,
  cursor: <><circle cx="16" cy="16" r="13.500" strokeWidth="2" /><circle cx="16" cy="16" r="13.500" stroke="#c05050" strokeWidth="2" strokeDasharray="7 7" /><path d="M16 7v6M16 19v6M7 16h6M19 16h6" stroke="#aaa" /></>,
  move: <><path d="M16 1l4 6h-8zM16 31l4-6h-8zM1 16l6-4v8zM31 16l-6-4v8z" {...W} /><path d="M16 8.500v4M16 19.500v4M8.500 16h4M19.500 16h4" strokeWidth="2" /></>,
  rotate: <><path d="M4.500 13A12.500 12.500 0 0 1 26 8.500M28 19A12.500 12.500 0 0 1 6 23.500" /><path d="M1 14h8l-4 6zM31 18h-8l4-6z" {...W} /><path d="M16 11.500l4.500 4.500-4.500 4.500-4.500-4.500z" fill="#b0b0b0" stroke="none" /></>,
  scale: <><path d="M5 13V4.500h22v22h-8" /><rect x="4" y="15" width="12" height="12" {...W} /><path d="M17 14l6-6M19 7h5v5" strokeWidth="2" strokeDasharray="7 1" /></>,
  transform: <><circle cx="16" cy="16" r="12" strokeDasharray="13 5.850" strokeDashoffset="-3" /><path d="M16 0l4 6h-8zM16 32l4-6h-8zM1 16l5-4v8zM31 16l-5-4v8z" {...W} /><rect x="10.500" y="10.500" width="11" height="11" {...W} /></>,
  annotate: <><path d="M19 3l3-3 6 4-3 5zM18 5l7 5L11 26l-7 4 2-9z" {...W} /><path d="M7 30c9 2 9-8 15-8 4 0 5 2 7 5" stroke="#8fd8b0" /></>,
  measure: <><path d="M5 1h6v25h18v5H5z" {...W} /><path d="M12 13a14 14 0 0 1 13 12H12z" fill="#8fe0b8" stroke="none" /><path d="M12 10c8 0 15 7 15 15" stroke="#8fe0b8" /><path d="M8 4h3M8 8h3M8 12h3M8 16h3M8 20h3M12 28v3M16 28v3M20 28v3M24 28v3" stroke="#282828" strokeWidth="1" /></>,
  addcube: <g stroke="#8fd8b0"><path d="M5 1v8M1 5h8" strokeWidth="2.600" /><path d="M7 12h17v17H7zM7 12l5-6h17l-5 6M29 6v17l-5 6" strokeWidth="1.300" /></g>,
};
const tools = [
  [["select", true, true], ["cursor"]],
  [["move"], ["rotate"], ["scale", false, true], ["transform"]],
  [["annotate", false, true], ["measure"]],
  [["addcube", false, true]],
];
const ViewInfo = styled.div`
  flex: 1;
  padding-left: 22px;
  line-height: 22px;
  font-weight: 500;
  color: #ffffff;
  text-shadow: 0 0 2px #000;
`;
const NavColumn = styled.div`
  display: flex;
  flex-direction: column;
  align-items: flex-end;
  gap: 3px;
`;
const GizmoSvg = styled.svg`
  width: 96px;
  height: 98px;
  margin: 4px 3px 6px 0;
  font: 600 14px Inter, sans-serif;
`;
const NavButton = styled.button`
  display: flex;
  align-items: center;
  justify-content: center;
  width: 34px;
  height: 34px;
  border-radius: 17px;
  background: rgba(38, 38, 38, 0.75);
  & > svg { width: 22px; height: 22px; fill: none; stroke: #d8d8d8; stroke-width: 1.5; }
`;
const N = { fill: "#d8d8d8", stroke: "none" };
const navs = [
  ["Zoom", <><circle cx="9" cy="9" r="8" {...N} /><path d="M14 14l7 7" strokeWidth="3" /><path d="M9 5v8M5 9h8" stroke="#333" /></>],
  ["Pan", <path d="M5.500 21C4 18 1 14 1 12c1-1.500 3 0 4.500 2L4 5c0-1.500 2-2 2.500 0L8 10l.5-8c0-2 2.500-2 2.500 0l.5 8 2-7c.5-1.500 2.500-1 2.300.5L15 11l3-4c1-1 2.500 0 2 1.500-1 3-3 9-5 12.500z" {...N} />],
  ["Camera view", <><circle cx="7" cy="6" r="4.500" /><circle cx="15" cy="5" r="4" /><circle cx="7" cy="6" r="1" /><circle cx="15" cy="5" r="1" /><path d="M6 13h9v8H6zM16 17l5-4v8zM3 12h3" /></>],
  ["Perspective", <path d="M6 2h10l5 18H1zM9.500 2L8 20M12.500 2L14 20M4.500 7.500h13M3 13.500h16" />],
];

const Viewport = () => (
  <Editor $flex="1223 1 0" $bg="#3d3d3d">
    <Scene />
    <Header $pad={10} $bg="rgba(48,48,48,.8)">
      <TypeButton icon="view3d" label="Editor type: 3D Viewport" w={36} />
      <Select icon="object" value="Object Mode" label="Mode" w={137} pl={31} />
      <Menus>{["View", "Select", "Add", "Object"].map((m) => <MenuButton key={m}>{m}</MenuButton>)}</Menus>
      <Spacer $n={30} />
      <Select icon="axes" value="Global" label="Transform orientation" w={96} pl={31} />
      <TypeButton icon="pivot" label="Pivot point" w={36} />
      <Group><Seg $tone="dim" $w={23} aria-label="Snap"><Icon n="magnet" /></Seg><Seg $w={38} aria-label="Snapping"><Icon n="snapinc" /><Icon n="down" s={16} /></Seg></Group>
      <Group><Seg $tone="tool" $w={23} aria-label="Proportional editing"><Icon n="prop" /></Seg><Seg $w={38} $tone="off" aria-label="Falloff"><Icon n="falloff" /><Icon n="down" s={16} /></Seg></Group>
      <Spacer $n={160} />
      <TypeButton icon="eyecursor" label="Visibility" w={37} />
      <Group><Seg $w={23} $tone="blue" aria-label="Show gizmos"><Icon n="gizmo" /></Seg><Seg $w={23} aria-label="Gizmo options"><Icon n="down" s={16} /></Seg></Group>
      <Group><Seg $w={23} $tone="blue" aria-label="Show overlays"><Icon n="overlay" /></Seg><Seg $w={23} aria-label="Overlay options"><Icon n="down" s={16} /></Seg></Group>
      <Group><Seg $w={22} $tone="tool" aria-label="Toggle X-ray"><Icon n="xray" /></Seg></Group>
      <Group>
        {["wire", "solid", "matprev", "rendered"].map((s) => <Seg key={s} $w={23} $tone={s === "solid" ? "blue" : "tool"} aria-label={s}><Icon n={s} /></Seg>)}
        <Seg $w={23} aria-label="Shading options"><Icon n="down" s={16} /></Seg>
      </Group>
    </Header>
    <RegionRow>
      <RegionTab>
        <Group>
          {["selnew", "seladd", "selsub", "selxor", "selint"].map((s) => <Seg key={s} $w={23} $tone={s === "selnew" ? "blue" : "tool"} aria-label={s}><Icon n={s} /></Seg>)}
        </Group>
      </RegionTab>
      <RegionTab $right><Group><Seg $w={78}>Options<Icon n="down" s={16} /></Seg></Group></RegionTab>
    </RegionRow>
    <ViewBody>
      <ToolColumn>
        {tools.map((g, i) => (
          <ToolGroup key={i}>
            {g.map(([t, on, more]) => (
              <ToolButton key={t} $active={on} $more={more} aria-label={t}><ToolSvg viewBox="0 0 32 32">{toolArt[t]}</ToolSvg></ToolButton>
            ))}
          </ToolGroup>
        ))}
      </ToolColumn>
      <ViewInfo><div>User Perspective</div><div>(1) Collection | Cube</div></ViewInfo>
      <NavColumn>
        <GizmoSvg viewBox="1987 108 96 98" fill="none" textAnchor="middle">
          <circle cx="2019" cy="140" r="9" stroke="#99404d" strokeWidth="1.500" fill="#f6365622" />
          <circle cx="2035" cy="192" r="9" stroke="#2d62a3" strokeWidth="1.500" fill="#3a5068" />
          <circle cx="1998.500" cy="163" r="9.500" stroke="#7db81b" strokeWidth="1.500" fill="#53692f" />
          <path d="M2035 156V120" stroke="#2f83e3" strokeWidth="2.400" />
          <path d="M2035 156l36-7" stroke="#6fa31c" strokeWidth="2.400" />
          <path d="M2035 156l16 16" stroke="#f63656" strokeWidth="2.400" />
          <circle cx="2035" cy="120" r="10" fill="#2f83e3" /><circle cx="2071.500" cy="149" r="10" fill="#6fa31c" /><circle cx="2051.500" cy="172" r="10.500" fill="#f63656" />
          <text x="2035" y="125" fill="#0d2748">Z</text><text x="2071.500" y="154" fill="#1d2d06">Y</text><text x="2051.500" y="177" fill="#3c0a14">X</text>
        </GizmoSvg>
        {navs.map(([t, art]) => <NavButton key={t} aria-label={t}><svg viewBox="0 0 22 22">{art}</svg></NavButton>)}
      </NavColumn>
    </ViewBody>
    <CollapseTab $top={90} $side="right" aria-label="Show sidebar"><Icon n="left" s={14} /></CollapseTab>
  </Editor>
);

/* ---------- nodes ---------- */

const NodeCanvas = styled.div`
  position: absolute;
  inset: 0;
  overflow: hidden;
`;
const LinkSvg = styled.svg`
  position: absolute;
  inset: 0;
  width: 100%;
  height: 100%;
  pointer-events: none;
`;
const NodeBox = styled.article`
  position: absolute;
  left: ${(p) => p.$x - 1}px;
  top: ${(p) => p.$y - 626}px;
  width: 187px;
  padding-bottom: 6px;
  border: ${(p) => (p.$selected ? "1px solid #d9530f" : "0")};
  border-radius: 6px;
  background: ${c.editor};
  box-shadow: 0 2px 8px rgba(0, 0, 0, 0.35);
  text-shadow: 0 1px 2px rgba(0, 0, 0, 0.7);
`;
const NodeHead = styled.header`
  display: flex;
  align-items: center;
  gap: 3px;
  height: ${(p) => p.$h || 26}px;
  padding-left: ${(p) => p.$pl || 12}px;
  margin-bottom: ${(p) => p.$mb || 6}px;
  border-radius: 5px 5px 0 0;
  background: ${(p) => p.$bg};
`;
const SocketRow = styled.div`
  position: relative;
  display: flex;
  align-items: center;
  height: 28px;
  padding: 0 14px;
  justify-content: ${(p) => (p.$out ? "flex-end" : "flex-start")};
`;
const Socket = styled.span`
  position: absolute;
  top: 8px;
  ${(p) => (p.$out ? "right" : "left")}: -6px;
  width: 12px;
  height: 12px;
  border-radius: 6px;
  background: ${(p) => p.$color};
  border: 1px solid ${(p) => p.$ring || "#111"};
  ${(p) => p.$multi && css`width: 8px; height: 16px; top: 6px; right: -4px; border-radius: 1px;`}
`;
const NodeWidgets = styled.div`
  display: flex;
  flex-direction: column;
  gap: 4px;
  padding: 9px 13px 0;
`;
const Stack = styled.div`
  position: absolute;
  left: ${(p) => p.$i}px;
  right: ${(p) => p.$i}px;
  bottom: ${(p) => -p.$d}px;
  height: 3px;
  background: ${(p) => p.$bg};
  border-radius: 0 0 5px 5px;
`;
const GroupIdRow = styled.div`
  display: flex;
  margin: 5px 14px 9px;
`;
const SelectionFrame = styled.div`
  position: absolute;
  left: 861px;
  top: 229px;
  width: 551px;
  height: 286px;
  border: 2px solid #ffff00;
`;
const InputNode = ({ x, y, title, out }) => (
  <NodeBox $x={x} $y={y}>
    <NodeHead $bg="#1d1d1d"><Icon n="wide" />{title}</NodeHead>
    <SocketRow $out={out}>Geometry<Socket $out={out} $color={c.geo} /></SocketRow>
    <SocketRow $out={out}><Socket $out={out} $color="#303030" $ring="#777" /></SocketRow>
  </NodeBox>
);
const RoundNode = ({ x, y }) => (
  <NodeBox $x={x} $y={y} $selected>
    <NodeHead $bg="#246283" $mb={5} $pl={11}><Icon n="wide" />Round</NodeHead>
    <SocketRow $out>Value<Socket $out $color="#a1a1a1" /></SocketRow>
    <NodeWidgets>
      <Select value="Round" label="Rounding" h={26} />
      <Check label="Clamp" h={32} />
    </NodeWidgets>
    <SocketRow>Value<Socket $color="#a1a1a1" /></SocketRow>
  </NodeBox>
);

/* ---------- node editor ---------- */

const NodeMain = styled.div`
  display: flex;
  flex: 1 1 0;
  min-height: 0;
`;
const Crumbs = styled.div`
  position: relative;
  display: flex;
  align-items: center;
  flex: 1;
  gap: 11px;
  height: 24px;
  margin-top: 16px;
  padding-left: 20px;
  & > svg { margin: 0 -3px 0 2px; }
`;
const SideRegion = styled.aside`
  position: relative;
  display: flex;
  min-height: 0;
  margin-top: 3px;
`;
const Panels = styled.div`
  display: flex;
  flex-direction: column;
  gap: 2px;
  width: 305px;
  overflow: hidden;
`;
const Panel = styled.section`
  flex: none;
  background: ${c.panel};
  border: 1px solid ${(p) => (p.$active ? c.blue : c.panel)};
  border-radius: 5px;
  overflow: hidden;
  ${shade}
`;
const PanelHead = styled.header`
  display: flex;
  align-items: center;
  gap: 2px;
  height: 31px;
  padding: 0 11px 0 6px;
  & > span:last-child { margin-left: auto; }
`;
const PropRow = styled.div`
  display: grid;
  grid-template-columns: 118px minmax(0, 1fr);
  align-items: center;
  gap: 12px;
  height: 27px;
  margin-top: ${(p) => p.$mt || 0}px;
  padding-right: 10px;
  & > label:first-child { text-align: right; }
`;
const SubHead = styled.div`
  display: flex;
  align-items: center;
  gap: 4px;
  height: 29px;
  padding-left: 12px;
`;
const SubBody = styled.div`
  padding: 1px 0 10px;
  background: #363636;
  & > div { height: 25px; }
`;
const NumberRow = styled.div`
  display: flex;
  gap: 1px;
  height: 24px;
  border-radius: 4px;
  overflow: hidden;
`;
const SocketPanel = styled.div`
  display: flex;
  gap: 12px;
  padding: 10px 10px 6px;
`;
const SocketList = styled.div`
  flex: 1;
  padding: 6px;
  border-radius: 5px;
  background: ${c.box};
`;
const ListRow = styled.div`
  display: flex;
  align-items: center;
  height: 24px;
  margin-bottom: 3px;
  padding: 0 12px 0 28px;
  gap: 8px;
  border-radius: ${(p) => (p.$active ? 5 : 0)}px;
  color: ${(p) => (p.$active ? "#ffffff" : "#c4c4c4")};
  background: ${(p) => (p.$active ? c.blue : "transparent")};
  border-bottom: ${(p) => (p.$active ? "0" : "1px solid #262626")};
  & > span { flex: 1; }
`;
const GeoDot = styled.i`
  flex: none;
  width: 12px;
  height: 12px;
  border-radius: 6px;
  border: 1px solid ${(p) => (p.$hidden ? "transparent" : "#10362c")};
  background: ${(p) => (p.$hidden ? "transparent" : c.geo)};
`;
const ListFoot = styled.div`
  display: flex;
  align-items: center;
  justify-content: space-between;
  height: 10px;
  padding: 0 94px 0 5px;
`;
const ListButtons = styled.div`
  display: flex;
  flex-direction: column;
  gap: 1px;
`;
const ListButton = styled.button`
  display: flex;
  align-items: center;
  justify-content: center;
  width: 24px;
  height: 24px;
  border-radius: ${(p) => p.$r};
  margin-top: ${(p) => p.$mt || 0}px;
  background: ${(p) => (p.$tool ? c.tool : "#282828")};
`;
const ScrollV = styled.div`
  width: 5px;
  height: 83%;
  margin: 0 3px 0 2px;
  border-radius: 3px;
  background: #303030;
`;
const ScrollH = styled.div`
  position: absolute;
  left: ${(p) => p.$l}px;
  right: 10px;
  bottom: 1px;
  height: 5px;
  border-radius: 3px;
  background: ${(p) => p.$bg || "#303030"};
`;
const SideTabs = styled.div`
  display: flex;
  flex-direction: column;
  gap: 6px;
  padding: 5px 3px 0 0;
`;
const SideTab = styled.button`
  writing-mode: vertical-rl;
  width: 20px;
  padding: 10px 0;
  line-height: 20px;
  border-radius: 5px;
  color: ${(p) => (p.$active ? "#ffffff" : "#9a9a9a")};
  background: ${(p) => (p.$active ? "#303030" : "#1d1d1d")};
`;

const Sidebar = () => (
  <SideRegion>
    <Panels>
      <Panel>
        <PanelHead><Icon n="wide" />Group<DotsBox /></PanelHead>
        <PropRow $mt={7}><label htmlFor="grp-name">Name</label><Field id="grp-name" $h={24} $r={4} defaultValue="Geometry Nodes" /></PropRow>
        <PropRow><label htmlFor="grp-desc">Description</label><Field id="grp-desc" $h={24} $r={4} placeholder="Description" /></PropRow>
        <PropRow><label htmlFor="grp-tag">Color Tag</label><Select id="grp-tag" value="None" /></PropRow>
        <PropRow>
          <label htmlFor="grp-width">Node Width</label>
          <NumberRow>
            <Field id="grp-width" $h={24} $bg={c.tool} $align="center" defaultValue="140" />
            <Seg $tone="dim" aria-label="Set default width"><Icon n="decorate" color="#5c5c5c" /></Seg>
          </NumberRow>
        </PropRow>
        <PropRow><span /><Check label="Show Manage Panel" on /></PropRow>
        <SubHead><Icon n="wide" />Usage</SubHead>
        <SubBody>
          <PropRow><span /><Check label="Modifier" on /></PropRow>
          <PropRow><span /><Check label="Tool" /></PropRow>
        </SubBody>
      </Panel>
      <Panel>
        <PanelHead><Icon n="wide" />Group Sockets<DotsBox /></PanelHead>
        <SocketPanel>
          <SocketList>
            <ListRow><GeoDot $hidden /><span>Geometry</span><GeoDot /></ListRow>
            <ListRow $active><GeoDot /><span>Geometry</span></ListRow>
            <ListRow /><ListRow /><ListRow />
            <ListFoot><Icon n="tri" s={12} color="#fff" /><DotsBox /></ListFoot>
          </SocketList>
          <ListButtons>
            <ListButton $r="5px 5px 0 0" aria-label="Add socket"><Icon n="plus" /></ListButton>
            <ListButton $r="0 0 5px 5px" $tool aria-label="Remove socket"><Icon n="minus" /></ListButton>
            <ListButton $r="5px" $mt={7} aria-label="Socket specials"><Icon n="wide" /></ListButton>
          </ListButtons>
        </SocketPanel>
        <PropRow><label htmlFor="sock-type">Type</label><Select id="sock-type" icon="geodot" color={c.geo} value="Geometry" pl={31} /></PropRow>
        <PropRow $mt={4}><label htmlFor="sock-desc">Description</label><Field id="sock-desc" $h={24} $r={4} /></PropRow>
        <PropRow $mt={10}><span /><Check label="Optional Label" /></PropRow>
      </Panel>
    </Panels>
    <ScrollV />
    <SideTabs role="tablist">
      {["Group", "Node", "Tool", "View", "Node Wrangler"].map((t) => <SideTab key={t} role="tab" $active={t === "Group"}>{t}</SideTab>)}
    </SideTabs>
  </SideRegion>
);

const dots = [];
for (let i = 0; i < 5; i++) for (let j = 0; j < 5; j++) dots.push([i, j]);

const NodeEditor = () => (
  <Editor $flex="595 1 0" $bg="#1d1d1d">
    <NodeCanvas>
      <LinkSvg>
        <defs>
          <pattern id="dots" width="132.600" height="132.600" patternUnits="userSpaceOnUse" patternTransform="translate(89 9)">
            {dots.map(([i, j]) => <rect key={`${i}${j}`} x={i * 26.5} y={j * 26.5} width="2" height="2" fill={i || j ? "#232323" : "#2c2c2c"} />)}
          </pattern>
        </defs>
        <rect width="100%" height="100%" fill="url(#dots)" />
      </LinkSvg>
      <InputNode x={145} y={725} title="Group Input" out />
      <InputNode x={389} y={737} title="Group Output" />
      <NodeBox $x={578} $y={936}>
        <Stack $i={10} $d={3} $bg="#292929" /><Stack $i={20} $d={6} $bg="#242424" />
        <NodeHead $h={27} $mb={5} $bg="#384825"><Icon n="wide" />NodeGroup</NodeHead>
        <SocketRow $out>Socket<Socket $out $multi $color="#a1a1a1" /></SocketRow>
        <SocketRow $out>Socket<Socket $out $multi $color="#a1a1a1" /></SocketRow>
        <GroupIdRow>
          <Group $grow>
            <Seg $w={40} aria-label="Browse node group"><Icon n="nodetree" /><Icon n="down" s={16} /></Seg>
            <Field aria-label="Node group" defaultValue="NodeGr..." />
            <Seg $w={25} $tone="tool" aria-label="Fake user"><Icon n="shield" /></Seg>
          </Group>
        </GroupIdRow>
      </NodeBox>
      <RoundNode x={924} y={921} />
      <RoundNode x={1170} y={924} />
      <SelectionFrame />
      <LinkSvg fill="none">
        <g transform="translate(-1 -626)">
          <path d="M336 771C352 771 366 782 384 782" stroke={c.geo} strokeWidth="4" />
          <path d="M768 1010C836 1010 858 1066 920 1066" stroke="#e6e6e6" strokeWidth="3.500" />
          <path d="M1115 969C1140 985 1142 1050 1166 1067" stroke="#e6e6e6" strokeWidth="3.500" />
          <path d="M1592.500 858v19l4.500-3.500 3.500 7.500 3-1.500-3-7.500h6z" fill="#000" stroke="#fff" strokeWidth="1.500" />
        </g>
      </LinkSvg>
      <ScrollH $l={8} />
    </NodeCanvas>
    <Header $pad={7}>
      <TypeButton icon="geonodes" label="Editor type: Geometry Nodes" />
      <Select icon="wrench" value="Modifier" label="Node tree sub-type" w={102} pl={32} />
      <Menus>{["View", "Select", "Add", "Node"].map((m) => <MenuButton key={m}>{m}</MenuButton>)}</Menus>
      <Spacer $n={525} />
      <Group>
        <Seg $w={38} aria-label="Browse node tree"><Icon n="nodetree" /><Icon n="down" s={16} /></Seg>
        <IdName $w={124}><Field aria-label="Node tree" defaultValue="Geometry Nodes" /></IdName>
        <Seg $tone="tool" aria-label="Fake user"><Icon n="shield" /></Seg>
        <Seg $tone="tool" aria-label="Duplicate"><Icon n="copy" /></Seg>
        <Seg $tone="tool" aria-label="Unlink"><Icon n="x" /></Seg>
      </Group>
      <Crumb><Icon n="pin" color="#a0a0a0" /></Crumb>
      <Spacer $n={847} />
      <Group><Seg $w={22} $tone="tool" aria-label="Snap"><Icon n="magnet" /></Seg></Group>
      <Group><Seg $w={23} $tone="blue" aria-label="Show overlays"><Icon n="overlay" /></Seg><Seg aria-label="Overlay options"><Icon n="down" s={16} /></Seg></Group>
    </Header>
    <NodeMain>
      <Crumbs>
        <Crumb><Icon n="object" />Cube</Crumb><Icon n="right" />
        <Crumb><Icon n="geonodes" />GeometryNodes</Crumb><Icon n="right" />
        <Crumb><Icon n="nodetree" />Geometry Nodes</Crumb>
      </Crumbs>
      <Sidebar />
    </NodeMain>
    <CollapseTab $top={57} $side="left" aria-label="Show toolbar"><Icon n="right" s={12} /></CollapseTab>
  </Editor>
);

/* ---------- timeline ---------- */

const TransportRow = styled.div`
  display: flex;
  gap: 7px;
`;
const NumLabel = styled.label`
  display: flex;
  align-items: center;
  width: ${(p) => p.$w}px;
  padding: 0 ${(p) => (p.$center ? 0 : 17)}px;
  background: ${c.tool};
  ${shade}
`;
const NumInput = styled.input`
  flex: 1;
  width: 100%;
  min-width: 0;
  text-align: ${(p) => (p.$center ? "center" : "right")};
`;
const Ruler = styled.div`
  position: relative;
  display: flex;
  flex-direction: column;
  flex: 1;
  background: #161616;
`;
const Ticks = styled.div`
  display: grid;
  grid-template-columns: repeat(21, minmax(0, 1fr));
  height: 30px;
  padding: 0 14px 0 114px;
  line-height: 31px;
  text-align: center;
  color: #c0c0c0;
`;
const Lanes = styled.div`
  display: grid;
  flex: 1;
  grid-template-columns: repeat(21, minmax(0, 1fr));
  padding: 0 14px 0 114px;
  background: linear-gradient(to right, #232323 75px, transparent 75px, transparent calc(100% - 76px), #232323 calc(100% - 76px)), ${c.editor};
  & > i {
    border-left: 1px solid rgba(0, 0, 0, 0.16);
    background: linear-gradient(#1c1c1c, #1c1c1c) center / 1px 100% no-repeat;
  }
`;
const Playhead = styled.div`
  position: absolute;
  z-index: 1;
  left: 61px;
  top: 2px;
  bottom: 0;
  width: 28px;
  display: flex;
  flex-direction: column;
  align-items: center;
  line-height: 25px;
  & > b {
    width: 28px;
    height: 25px;
    font-weight: 400;
    text-align: center;
    background: ${c.blue};
    border-radius: 5px;
    color: #ffffff;
  }
  &::after {
    content: "";
    flex: 1;
    width: 3px;
    background: ${c.blue};
  }
`;
const PlayTip = styled.i`
  border: 7px solid transparent;
  border-top: 5px solid ${c.blue};
  border-bottom: 0;
`;
const Timeline = () => (
  <Editor $flex="0 0 92px">
    <Header>
      <TypeButton icon="clock" label="Editor type: Timeline" w={37} />
      <Menus><MenuButton>View</MenuButton><MenuButton>Marker</MenuButton></Menus>
      <Select value="Playback" label="Playback" w={92} />
      <Spacer $n={590} />
      <TransportRow>
        <Group><Seg $w={23} $tone="dim" aria-label="Auto keying"><Icon n="dot" /></Seg><Seg $w={23} $tone="off" aria-label="Auto keying options"><Icon n="down" s={16} /></Seg></Group>
        <Group>{["first", "prevkey", "playback", "play", "nextkey", "last"].map((t) => <Seg key={t} $tone="tool" aria-label={t}><Icon n={t} color="#e6e6e6" /></Seg>)}</Group>
        <Group><Seg $w={23} $tone="tool" aria-label="Step back"><Icon n="stepback" color="#e6e6e6" /></Seg><Seg $w={23} $tone="tool" aria-label="Step forward"><Icon n="stepfwd" color="#e6e6e6" /></Seg><Seg $w={23} aria-label="Jump options"><Icon n="down" s={16} /></Seg></Group>
        <Group><Seg $w={23} $tone="dim" aria-label="Snap"><Icon n="magnetflat" color="#b0b0b0" /></Seg><Seg $w={23} aria-label="Snap options"><Icon n="down" s={16} /></Seg></Group>
      </TransportRow>
      <Spacer $n={466} />
      <Group><NumLabel $w={90} $center><NumInput $center aria-label="Current frame" defaultValue="1" /></NumLabel></Group>
      <Group>
        <Seg $tone="tool" aria-label="Preview range"><Icon n="stopwatch" /></Seg>
        <NumLabel $w={109}>Start<NumInput defaultValue="1" /></NumLabel>
        <NumLabel $w={105}>End<NumInput defaultValue="250" /></NumLabel>
      </Group>
      <Spacer $n={5} />
      <Group><Seg $w={23} $tone="blue" aria-label="Show overlays"><Icon n="overlay" /></Seg><Seg aria-label="Overlay options"><Icon n="down" s={16} /></Seg></Group>
    </Header>
    <Ruler>
      <Ticks>{Array.from({ length: 21 }, (_, i) => <span key={i}>{(i + 1) * 12}</span>)}</Ticks>
      <Lanes>{Array.from({ length: 21 }, (_, i) => <i key={i} />)}</Lanes>
      <Playhead><b>1</b><PlayTip /></Playhead>
      <ScrollH $l={10} $bg="rgba(90,90,90,.45)" />
    </Ruler>
    <CollapseTab $top={57} $side="left" aria-label="Show channels"><Icon n="right" s={12} /></CollapseTab>
  </Editor>
);

/* ---------- outliner ---------- */

const Tree = styled.div`
  position: relative;
  flex: 1;
  padding-top: 3px;
  background: repeating-linear-gradient(#282828 0 25px, #2b2b2b 25px 50px) 0 3px;
  &::after {
    content: "";
    position: absolute;
    left: 36px;
    top: 58px;
    width: 1px;
    height: 63px;
    background: #6a6a6a;
  }
`;
const OutRow = styled.div`
  position: relative;
  display: flex;
  align-items: center;
  height: 25px;
  padding: 0 9px 0 ${(p) => 24 + (p.$lvl === 2 ? 25 : 0)}px;
  color: ${(p) => p.$color || "#c0c0c0"};
  ${shade}
  ${(p) => p.$active && css`
    &::before {
      content: "";
      position: absolute;
      inset: 1px 0 1px 3px;
      border: 1px solid #5272b0;
      border-radius: 4px;
      background: #334d80;
    }
    & > * { position: relative; }
  `}
`;
const Slot = styled.span`
  display: flex;
  align-items: center;
  justify-content: center;
  width: 25px;
  height: 23px;
  border-radius: 5px;
  color: ${c.text};
  background: ${(p) => p.$bg || "transparent"};
`;
const RowName = styled.span`
  padding: 0 24px 0 6px;
`;
const OutCheck = styled.input`
  appearance: none;
  width: 14px;
  height: 14px;
  border-radius: 2px;
  background: ${c.text};
`;
const TickSlot = styled.label`
  position: relative;
  display: flex;
  align-items: center;
  justify-content: center;
  width: 25px;
  & > svg { position: absolute; pointer-events: none; }
`;
const Toggles = () => (
  <><Slot as="button" aria-label="Hide in viewport"><Icon n="eye" s={16} /></Slot><Slot as="button" aria-label="Disable in renders"><Icon n="camera" s={17} /></Slot></>
);
const Outliner = () => (
  <Editor $flex="0 0 236px" $bg="#282828">
    <Header $pad={8}>
      <TypeButton icon="outliner" label="Editor type: Outliner" w={37} />
      <TypeButton icon="layers" label="Display mode" w={37} />
      <Spacer $n={37} />
      <Search label="Search outliner" />
      <Spacer $n={95} />
      <TypeButton icon="funnel" label="Filter" w={37} />
      <Group><Seg $w={22} $tone="tool" aria-label="New collection"><Icon n="newcol" /></Seg></Group>
    </Header>
    <Tree>
      <OutRow><Slot><Icon n="collection" s={17} /></Slot><RowName>Scene Collection</RowName></OutRow>
      <OutRow $color="#ffffff">
        <Slot><Icon n="wide" s={17} /></Slot><Slot $bg="#4d4d4d"><Icon n="collection" s={17} /></Slot><RowName>Collection</RowName>
        <Spacer />
        <TickSlot><OutCheck type="checkbox" defaultChecked aria-label="Include Collection" /><Icon n="check" s={13} color="#222" /></TickSlot><Toggles />
      </OutRow>
      <OutRow $lvl={2}>
        <Slot><Icon n="right" s={17} /></Slot><Slot><Icon n="camobj" s={20} color={c.orange} /></Slot><RowName>Camera</RowName>
        <Slot $bg="#4d4d4d"><Icon n="camdata" s={20} color={c.teal} /></Slot><Spacer /><Toggles />
      </OutRow>
      <OutRow $lvl={2} $active $color="#f2a330">
        <Slot><Icon n="right" s={17} /></Slot><Slot $bg="#546ea3"><Icon n="meshobj" s={17} color={c.orange} /></Slot><RowName>Cube</RowName>
        <Slot><Icon n="wrench" color="#5f8ae6" /></Slot><Slot><Icon n="mesh" color={c.teal} /></Slot><Spacer /><Toggles />
      </OutRow>
      <OutRow $lvl={2}>
        <Slot><Icon n="right" s={17} /></Slot><Slot><Icon n="bulb" s={19} color={c.orange} /></Slot><RowName>Light</RowName>
        <Slot><Icon n="lightdata" s={20} color={c.teal} /></Slot><Spacer /><Toggles />
      </OutRow>
    </Tree>
  </Editor>
);

/* ---------- properties ---------- */

const PropBody = styled.div`
  display: flex;
  flex: 1;
`;
const TabRail = styled.nav`
  display: flex;
  flex-direction: column;
  align-items: flex-end;
  flex: none;
  width: 35px;
  padding-top: 11px;
  background: ${c.app};
`;
const RailTab = styled.button`
  display: flex;
  align-items: center;
  justify-content: center;
  width: 33px;
  height: 35px;
  margin-bottom: ${(p) => (p.$gap ? 9 : 0)}px;
  border-radius: 5px 0 0 5px;
  color: ${(p) => p.$color || "#b4b4b4"};
  background: ${(p) => (p.$plain ? "transparent" : p.$active ? c.editor : "#1f1f1f")};
  margin-top: ${(p) => (p.$plain ? 6 : 0)}px;
`;
const PropContent = styled.div`
  flex: 1;
  min-width: 0;
  padding: 0 7px 0 10px;
`;
const ContextRow = styled.div`
  display: flex;
  align-items: center;
  gap: 12px;
  height: 45px;
  margin-bottom: 11px;
  padding: 0 4px 0 3px;
  & > svg { margin-left: 4px; margin-right: -5px; }
  & > svg:last-child { margin: 0 0 0 auto; }
`;
const AddButton = styled.button`
  display: flex;
  align-items: center;
  width: 100%;
  height: 25px;
  padding: 0 0 0 5px;
  margin-bottom: 12px;
  border-radius: 5px;
  background: ${c.tool};
  ${shade}
  & > span { flex: 1; text-align: center; }
`;
const ProfileBox = styled.dl`
  display: grid;
  grid-template-columns: 17fr 16fr;
  row-gap: 17px;
  margin: 10px;
  padding: 8px 6px 9px;
  border-radius: 5px;
  background: ${c.box};
  & > * { margin: 0; }
`;
const Slow = styled.dd`
  color: #d2605e;
`;
const PanelGap = styled.div`
  height: 2px;
`;
const ModHead = styled(PanelHead)`
  height: 30px;
  & > div { margin-left: 12px; flex: 1; }
  & > svg:nth-child(2) { margin-left: 2px; }
  & > button:nth-last-child(2) { margin-right: 11px; background: none; }
`;
const ModRow = styled.div`
  display: flex;
  padding: 10px 10px 7px;
`;
const ManageRow = styled.button`
  display: flex;
  align-items: center;
  gap: 5px;
  height: 25px;
  margin-bottom: 6px;
  padding-left: 13px;
`;
const WideIdName = styled(IdName)`
  flex: 1;
  width: auto;
`;
const rail = [
  ["tools", null, true], ["render"], ["output"], ["layers"], ["scene"], ["world", "#b0525a", true],
  ["collectionline", null, true], ["object", c.orange], ["wrenchfill", "#6e9bff"], ["particles", "#5b82c9"],
  ["physics", "#5b82c9"], ["constraint", "#5b82c9"], ["mesh", c.teal], ["material", "#b4575f"],
];
const Properties = () => (
  <Editor>
    <Header $pad={8}>
      <TypeButton icon="props" label="Editor type: Properties" w={37} />
      <Spacer $n={97} />
      <Search label="Search properties" />
      <Spacer $n={109} />
      <Group><Seg $w={22} aria-label="Options"><Icon n="down" /></Seg></Group>
    </Header>
    <PropBody>
      <TabRail>
        {rail.map(([n, color, gap]) => <RailTab key={n} $color={color} $gap={gap} $active={n === "wrenchfill"} aria-label={n}><Icon n={n} /></RailTab>)}
        <RailTab as="span" $plain $color="#4a4a4a"><Icon n="wide" s={14} /></RailTab>
      </TabRail>
      <PropContent>
        <ContextRow>
          <Crumb><Icon n="object" />Cube</Crumb><Icon n="right" />
          <Crumb><Icon n="geonodes" />GeometryNodes</Crumb><Icon n="pin" color="#a0a0a0" />
        </ContextRow>
        <AddButton><Icon n="plus" /><span>Add Modifier</span></AddButton>
        <Panel>
          <PanelHead><Icon n="wide" />Modifier Profiling<DotsBox /></PanelHead>
          <ProfileBox><dt>GeometryNodes:</dt><Slow>3.5 ms</Slow><dt>TOTAL:</dt><dd>3.5 ms</dd></ProfileBox>
        </Panel>
        <PanelGap />
        <Panel $active>
          <ModHead>
            <Icon n="wide" /><Icon n="geonodes" />
            <Group>
              <WideIdName><Field aria-label="Modifier name" defaultValue="GeometryNodes" /></WideIdName>
              <Seg $tone="tool" aria-label="On cage"><Icon n="mesh" /></Seg>
              <Seg $tone="blue" aria-label="Edit mode"><Icon n="editmode" /></Seg>
              <Seg $tone="blue" aria-label="Realtime"><Icon n="monitor" /></Seg>
              <Seg $tone="blue" aria-label="Render"><Icon n="camera" /></Seg>
              <Seg aria-label="Modifier options"><Icon n="wide" /></Seg>
            </Group>
            <Seg aria-label="Remove modifier"><Icon n="x" /></Seg>
            <DotsBox />
          </ModHead>
          <ModRow>
            <Group $grow>
              <Seg $w={38} aria-label="Browse node group"><Icon n="nodetree" /><Icon n="down" s={16} /></Seg>
              <WideIdName><Field aria-label="Node group" defaultValue="Geometry Nodes" /></WideIdName>
              <Seg $tone="tool" aria-label="Fake user"><Icon n="shield" /></Seg>
              <Seg $tone="tool" aria-label="Duplicate"><Icon n="copy" /></Seg>
              <Seg $tone="tool" aria-label="Unlink"><Icon n="x" /></Seg>
            </Group>
          </ModRow>
          <ManageRow><Icon n="right" />Manage</ManageRow>
        </Panel>
      </PropContent>
    </PropBody>
  </Editor>
);

/* ---------- status bar and shell ---------- */

const Status = styled.footer`
  display: flex;
  align-items: center;
  padding: 2px 12px 0 0;
  color: #8c8c8c;
`;
const Report = styled.div`
  display: flex;
  align-items: center;
  gap: 6px;
  height: 26px;
  padding-right: 12px;
  border-radius: 5px;
  overflow: hidden;
  background: #1c2a42;
  color: ${c.text};
`;
const ReportIcon = styled.span`
  display: flex;
  align-items: center;
  justify-content: center;
  width: 30px;
  height: 26px;
  background: #294a82;
`;
const Page = styled.div`
  display: grid;
  grid-template-rows: 30px minmax(0, 1fr) 28px;
  height: 100vh;
`;
const Main = styled.main`
  display: grid;
  grid-template-columns: minmax(0, 2097fr) minmax(0, 451fr);
  gap: 4px;
  min-height: 0;
`;
const Column = styled.div`
  display: flex;
  flex-direction: column;
  gap: 4px;
  min-height: 0;
`;
const Split = styled.div`
  display: flex;
  flex: 592 1 0;
  gap: 4px;
  min-height: 0;
`;

export default function App() {
  return (
    <>
      <Global />
      <Page>
        <TopBar />
        <Main>
          <Column>
            <Split><Spreadsheet /><Viewport /></Split>
            <NodeEditor />
            <Timeline />
          </Column>
          <Column><Outliner /><Properties /></Column>
        </Main>
        <Status>
          <Spacer $n={1121} />
          <Report><ReportIcon><Icon n="info" s={20} color="#fff" /></ReportIcon>Saved "make_group_crash2.blend"</Report>
          <Spacer $n={1087} />
          5.2.0 a
        </Status>
      </Page>
    </>
  );
}
